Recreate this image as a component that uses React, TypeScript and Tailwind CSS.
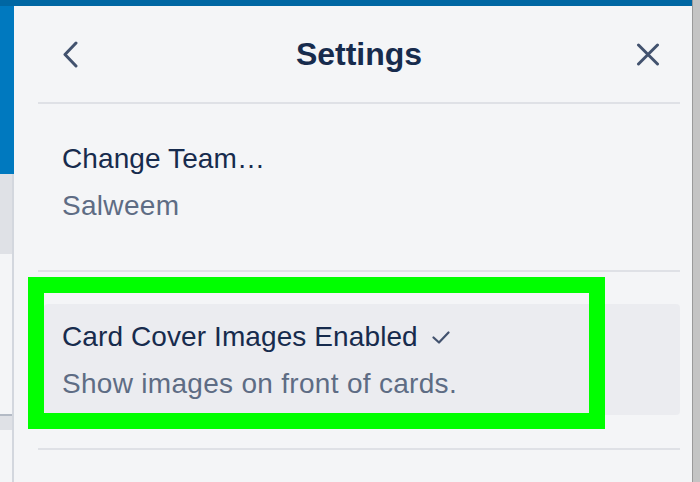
import type { ReactNode } from 'react';

// Settings side panel (Trello-style), with a highlighted option row

function BackIcon() {
  return (
    <svg width="16" height="27" viewBox="0 0 16 27" fill="none" stroke="#42526e" strokeWidth="3" strokeLinecap="round" strokeLinejoin="round">
      <path d="M14 2 L3 13.5 L14 25" />
    </svg>
  );
}

function CloseIcon() {
  return (
    <svg width="24" height="23" viewBox="0 0 24 23" fill="none" stroke="#42526e" strokeWidth="3" strokeLinecap="round">
      <path d="M2.5 2 L21.5 21 M21.5 2 L2.5 21" />
    </svg>
  );
}

function CheckIcon() {
  return (
    <svg width="18" height="13" viewBox="0 0 18 13" fill="none" stroke="#42526e" strokeWidth="2.2" strokeLinecap="round" strokeLinejoin="round" className="mt-[2px]">
      <path d="M1.5 6.5 L7 11.5 L16.5 1.5" />
    </svg>
  );
}

function OptionRow({ title, sub, active, check }: { title: string; sub: string; active?: boolean; check?: boolean }) {
  return (
    <div className={`ml-[6px] rounded-[4px] pl-[18px] pt-[9px] pb-[8px] ${active ? 'bg-[#ebecf0]' : ''}`}>
      <div className="flex items-center gap-[14px] text-[28px] leading-[47px] tracking-[0.1px] text-[#172b4d]">
        <span>{title}</span>
        {check && <CheckIcon />}
      </div>
      <div className="text-[28px] leading-[47px] tracking-[0.3px] text-[#5e6c84]">{sub}</div>
    </div>
  );
}

function Divider({ className }: { className?: string }) {
  return <div className={`h-[2px] bg-[#dfe1e6] ${className ?? ''}`} />;
}

function BoardStrip({ children }: { children?: ReactNode }) {
  return (
    <div className="flex w-[14px] shrink-0 flex-col">
      <div className="h-[168px] bg-[#0079bf]" />
      <div className="flex flex-1 flex-col border-r-2 border-[#d3d7de]">
        <div className="h-[80px] bg-[#dfe1e6]" />
        <div className="h-[160px] bg-[#f4f5f7]" />
        <div className="h-[2px] bg-[#b3bac5]" />
        <div className="h-[14px] bg-[#dfe1e6]" />
        <div className="flex-1 bg-[#f4f5f7]" />
      </div>
      {children}
    </div>
  );
}

export default function App() {
  return (
    <div className="relative flex h-[482px] w-[700px] overflow-hidden bg-[#f4f5f7] font-['Liberation_Sans',Arial,sans-serif]">
      <div className="flex w-[692px] flex-col">
        <div className="h-[6px] bg-[#0067a3]" />
        <div className="flex flex-1">
          <BoardStrip />
          <div className="flex flex-1 flex-col bg-[#f4f5f7] pl-[24px] pr-[12px]">
            <div className="grid h-[96px] grid-cols-[1fr_auto_1fr] items-center">
              <div className="pl-[24px]">
                <BackIcon />
              </div>
              <div className="text-[32px] font-bold leading-[32px] text-[#172b4d]">Settings</div>
              <div className="flex justify-end pr-[20px]">
                <CloseIcon />
              </div>
            </div>
            <Divider />
            <div className="mt-[22px]">
              <OptionRow title="Change Team…" sub="Salweem" />
            </div>
            <Divider className="mt-[33px]" />
            <div className="mt-[32px]">
              <OptionRow title="Card Cover Images Enabled" sub="Show images on front of cards." active check />
            </div>
            <Divider className="mt-[33px]" />
          </div>
        </div>
      </div>
      <div className="w-[8px] border-l border-[#9a9a9a] bg-[#c4c4c4]" />

      {/* annotation highlight */}
      <div className="absolute left-[28px] top-[277px] h-[152px] w-[577px] border-[16px] border-[#00ff00]" />
    </div>
  );
}
